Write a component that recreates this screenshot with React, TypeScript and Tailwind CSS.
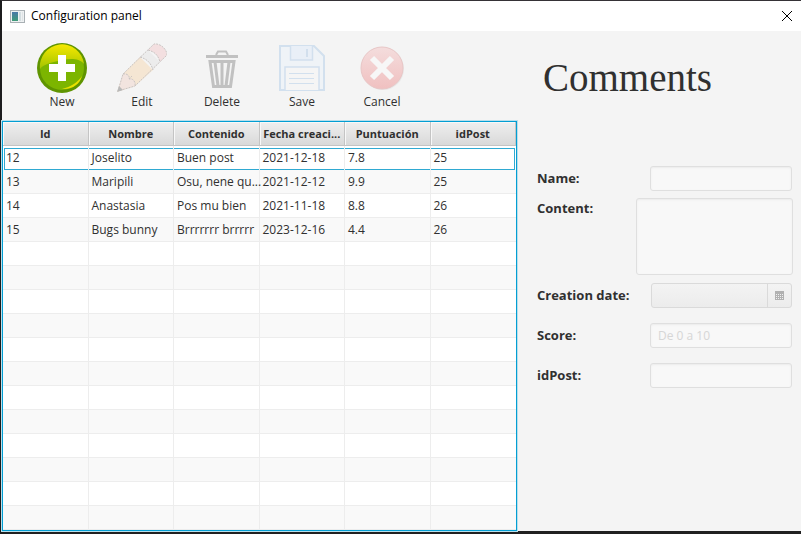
import type { ReactNode } from "react";

const columns = ["Id", "Nombre", "Contenido", "Fecha creaci...", "Puntuación", "idPost"];

const comments = [
  ["12", "Joselito", "Buen post", "2021-12-18", "7.8", "25"],
  ["13", "Maripili", "Osu, nene qu...", "2021-12-12", "9.9", "25"],
  ["14", "Anastasia", "Pos mu bien", "2021-11-18", "8.8", "26"],
  ["15", "Bugs bunny", "Brrrrrrr brrrrr", "2023-12-16", "4.4", "26"],
];

const emptyRow = ["", "", "", "", "", ""];
const rows = [...comments, ...Array.from({ length: 12 }, () => emptyRow)];

function WindowIcon() {
  return (
    <svg width="15" height="13" viewBox="0 0 15 13" aria-hidden="true">
      <defs>
        <linearGradient id="screen" x1="0" y1="0" x2="0" y2="1">
          <stop offset="0" stopColor="#4a78a8" />
          <stop offset="1" stopColor="#3f9b78" />
        </linearGradient>
      </defs>
      <rect x="0.5" y="0.5" width="14" height="12" fill="#eef1f2" stroke="#a9b0b4" />
      <rect x="2" y="2" width="6" height="9" fill="url(#screen)" />
      <rect x="9" y="2" width="2" height="9" fill="#d3dde0" />
      <rect x="12" y="2" width="1" height="9" fill="#dfe4e6" />
    </svg>
  );
}

function NewIcon() {
  return (
    <svg width="50" height="50" viewBox="0 0 50 50" aria-hidden="true">
      <defs>
        <linearGradient id="shine" x1="0.5" y1="0" x2="0.4" y2="1">
          <stop offset="0" stopColor="#f6e800" />
          <stop offset="1" stopColor="#a3c400" />
        </linearGradient>
      </defs>
      <circle cx="25" cy="25" r="25" fill="#5f9400" />
      <circle cx="25" cy="25" r="22" fill="#7cb500" />
      <path d="M3 26A22 22 0 0 1 47 21C41 14 30 16 21 18C12 20 6 22 3 26Z" fill="url(#shine)" />
      <path d="M25 46C34 44 41 39 45 33C43 41 35 47 25 46Z" fill="#e9e000" />
      <path d="M21 12h8v9h9v8h-9v9h-8v-9h-9v-8h9z" fill="#fff" />
    </svg>
  );
}

function EditIcon() {
  return (
    <svg width="50" height="50" viewBox="0 0 50 50" aria-hidden="true">
      <path d="M0 49L6 31L23 14L36 27L18 43Z" fill="#f5e6d3" />
      <path d="M6 31C10 30 13 33 12 36C16 35 19 39 18 43L5 47L2 43Z" fill="#f2e4df" />
      <path d="M23 14L31 7L43 19L36 27C34 20 30 16 23 14Z" fill="#ececec" />
      <path d="M31 7L37 1C43 0 50 6 50 12L43 19C41 12 38 9 31 7Z" fill="#f3dfe0" />
      <path
        d="M1 48L6 31L37 1C43 0 50 6 50 12L18 43ZM23 14C30 16 34 20 36 27M31 7C38 9 41 12 43 19M6 31C10 30 13 33 12 36C16 35 19 39 18 43M12 36L15 33"
        fill="none"
        stroke="#c9c4c2"
        strokeWidth="1"
        strokeDasharray="2 1"
      />
      <path d="M0 49L2 43L6 47Z" fill="#b9b9b9" />
    </svg>
  );
}

function DeleteIcon() {
  return (
    <svg width="50" height="50" viewBox="0 0 50 50" aria-hidden="true">
      <g fill="none" stroke="#c1c1c1">
        <path d="M9 13.5H41" strokeWidth="3" />
        <path d="M19 12L21 8.500H29L31 12" strokeWidth="2" />
        <path d="M13 18.500H37L33.500 43.500H16.500Z" strokeWidth="3" />
        <path d="M18 19L21 43M25 19V43M32 19L29 43" strokeWidth="3" />
      </g>
    </svg>
  );
}

function SaveIcon() {
  return (
    <svg width="50" height="50" viewBox="0 0 50 50" aria-hidden="true">
      <path d="M3 3H37L47 13V47H3Z" fill="#eff3f7" stroke="#d2e0ee" strokeWidth="2" />
      <path d="M13.500 3V17H35.500V3" fill="#e9eff7" stroke="#d2e0ee" strokeWidth="1.500" />
      <path d="M30 6V14" stroke="#d2dfed" strokeWidth="2" />
      <path d="M8 47V24H42V47" fill="#f5f5f5" stroke="#d2e0ee" strokeWidth="1.500" />
      <path d="M12 30.500H37M12 35.500H37M12 40.500H37" stroke="#d2e0ee" />
    </svg>
  );
}

function CancelIcon() {
  return (
    <svg width="50" height="50" viewBox="0 0 50 50" aria-hidden="true">
      <defs>
        <linearGradient id="cancel" x1="0" y1="0" x2="0" y2="1">
          <stop offset="0" stopColor="#f4dddd" />
          <stop offset="1" stopColor="#f0c0c0" />
        </linearGradient>
      </defs>
      <circle cx="26" cy="26" r="21" fill="#e9e9e9" />
      <circle cx="25" cy="25" r="21" fill="url(#cancel)" stroke="#e8c6c6" />
      <path d="M15 15L35 35M35 15L15 35" stroke="#f7f7f7" strokeWidth="6" />
    </svg>
  );
}

function ToolButton({ label, icon, disabled }: { label: string; icon: ReactNode; disabled?: boolean }) {
  return (
    <button type="button" disabled={disabled} className="flex w-20 flex-col items-center gap-px text-[12px] leading-4">
      {icon}
      <span>{label}</span>
    </button>
  );
}

const fieldClass =
  "ml-auto h-[25px] w-[142px] rounded-[3px] border border-[#dfdfdf] bg-[#f8f8f8] px-[7px] text-[12px] shadow-[inset_0_1px_2px_#ebebeb] placeholder:text-[#d6d6d6]";
const labelClass = "text-[13px] font-bold leading-6";

export default function App() {
  return (
    <div className="flex min-h-screen flex-col border-b-[3px] border-l-2 border-t border-b-[#202020] border-l-[#1c1c1e] border-t-[#353236] bg-[#f4f4f4] font-['Open_Sans','Noto_Sans',sans-serif] text-[#303030]">
      <header className="flex h-[30px] items-center bg-white pl-2 pr-2 text-black">
        <WindowIcon />
        <h1 className="ml-[6px] text-[12px]">Configuration panel</h1>
        <button type="button" aria-label="Close" className="ml-auto">
          <svg width="12" height="12" viewBox="0 0 12 12" aria-hidden="true">
            <path d="M1 1L11 11M11 1L1 11" stroke="#000" />
          </svg>
        </button>
      </header>

      <main className="flex flex-1">
        <section className="flex w-[515px] flex-col">
          <div className="flex h-[90px] pl-5 pt-3">
            <ToolButton label="New" icon={<NewIcon />} />
            <ToolButton label="Edit" icon={<EditIcon />} disabled />
            <ToolButton label="Delete" icon={<DeleteIcon />} disabled />
            <ToolButton label="Save" icon={<SaveIcon />} disabled />
            <ToolButton label="Cancel" icon={<CancelIcon />} disabled />
          </div>
          <div className="border border-[#039ed3] bg-white shadow-[0_0_0_1px_#b9dfeb]">
            <table className="w-full table-fixed border-separate border-spacing-0 text-[12px] leading-4">
              <thead>
                <tr className="h-6">
                  {columns.map((name) => (
                    <th
                      key={name}
                      scope="col"
                      className="whitespace-nowrap border-b border-r border-[#c4c4c4] bg-linear-to-b from-[#efefef] to-[#d9d9d9] p-0 pt-px text-center text-[11px] font-bold shadow-[inset_1px_1px_0_#f8f8f8]"
                    >
                      {name}
                    </th>
                  ))}
                </tr>
              </thead>
              <tbody>
                {rows.map((row, r) => (
                  <tr key={r} className="h-6 odd:bg-white even:bg-[#f9f9f9]">
                    {row.map((value, c) => (
                      <td
                        key={c}
                        className={
                          r === 0
                            ? "whitespace-nowrap border-r border-[#ededed] p-0 pt-px last:border-r-0"
                            : "whitespace-nowrap border-b border-r border-[#ededed] p-0 pl-[3px] last:border-r-0"
                        }
                      >
                        {r === 0 ? (
                          <div
                            className={
                              c === 0
                                ? "ml-px h-[22px] border-y border-l border-[#2fa9d2] pl-px leading-[18px]"
                                : c === 5
                                  ? "mr-px h-[22px] border-y border-r border-[#2fa9d2] pl-[3px] leading-[18px]"
                                  : "h-[22px] border-y border-[#2fa9d2] pl-[3px] leading-[18px]"
                            }
                          >
                            {value}
                          </div>
                        ) : (
                          value
                        )}
                      </td>
                    ))}
                  </tr>
                ))}
              </tbody>
            </table>
          </div>
        </section>

        <section className="flex-1 pl-5 pr-[9px]">
          <h2 className="pl-[6px] pt-[22px] font-['Palatino_Linotype','Liberation_Serif',serif] text-[39px] leading-[50px]">Comments</h2>
          <form className="mt-[63px]">
            <div className="flex">
              <label htmlFor="name" className={labelClass}>Name:</label>
              <input id="name" disabled className={fieldClass} />
            </div>
            <div className="-mr-px mt-[7px] flex">
              <label htmlFor="content" className="text-[13px] font-bold leading-5">Content:</label>
              <textarea
                id="content"
                disabled
                className="ml-auto h-[77px] w-[157px] resize-none rounded-[3px] border border-[#dfdfdf] bg-[#f8f8f8] shadow-[inset_0_1px_2px_#ebebeb]"
              />
            </div>
            <div className="mt-2 flex">
              <label htmlFor="date" className={labelClass}>Creation date:</label>
              <div className="ml-auto flex h-[25px] w-[141px] rounded-[3px] border border-[#dadada] bg-linear-to-b from-[#f3f3f3] to-[#ececec]">
                <input id="date" disabled className="min-w-0 flex-1 px-[7px] text-[12px]" />
                <button
                  type="button"
                  disabled
                  aria-label="Choose date"
                  className="flex w-6 items-center justify-center border-l border-[#dadada]"
                >
                  <svg width="9" height="9" viewBox="0 0 9 9" aria-hidden="true" shapeRendering="crispEdges">
                    <path d="M0 0H9V9H0Z" fill="#b1b1b1" />
                    <path d="M1 3.500H8M1 5.500H8M1 7.500H8" stroke="#f0f0f0" strokeDasharray="1 1" />
                  </svg>
                </button>
              </div>
            </div>
            <div className="mt-[15px] flex">
              <label htmlFor="score" className={labelClass}>Score:</label>
              <input id="score" disabled placeholder="De 0 a 10" className={fieldClass} />
            </div>
            <div className="mt-[15px] flex">
              <label htmlFor="post" className={labelClass}>idPost:</label>
              <input id="post" disabled className={fieldClass} />
            </div>
          </form>
        </section>
      </main>
    </div>
  );
}
